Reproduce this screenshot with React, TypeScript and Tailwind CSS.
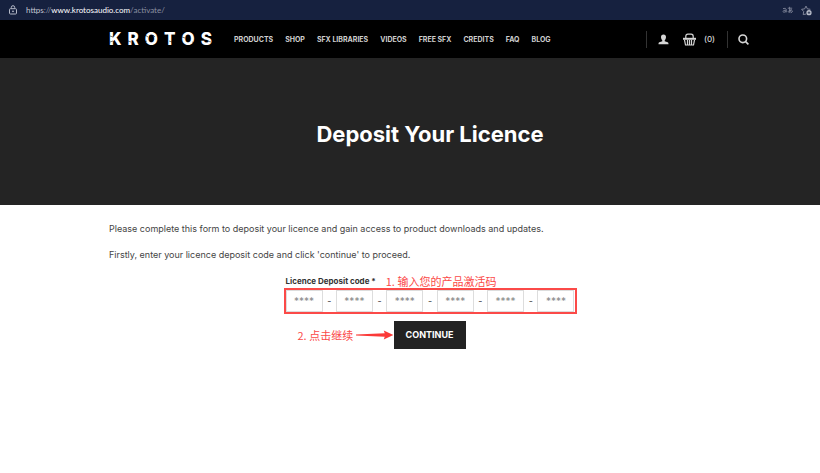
import { FormEvent, useState } from 'react'

const NAV_ITEMS = ['PRODUCTS', 'SHOP', 'SFX LIBRARIES', 'VIDEOS', 'FREE SFX', 'CREDITS', 'FAQ', 'BLOG']
const CODE_PARTS = 6

function AddressBar() {
  return (
    <div className="flex h-5 items-center bg-[#16213f] px-2 font-['Lato','Noto_Sans',sans-serif] text-[8px] text-[#8b90a0]">
      <svg viewBox="0 0 10 10" className="mr-2 size-[10px] shrink-0" fill="none" stroke="#b4b9c8" strokeWidth="1">
        <rect x="1.5" y="3.7" width="7" height="5.3" rx="0.9" />
        <path d="M3.3 3.5V2.4a1.7 1.7 0 0 1 3.4 0v1.1" />
        <circle cx="5" cy="6.3" r="0.5" fill="#b4b9c8" />
      </svg>
      <p className="grow leading-4">
        <span className="text-[#c3c7d2]">https</span>://<span className="text-white">www.krotosaudio.com</span>/activate/
      </p>
      <button aria-label="Translate" className="mr-2 flex">
        <svg viewBox="0 0 11 8" className="h-[8px] w-[11px]" fill="none" stroke="#7f8598" strokeWidth="0.9">
          <path d="M1 2.6q3-1 3.2.8v3M4.2 4.2Q1 4 .9 5.5q.3 1.6 3.3 0" />
          <path d="M5.8 2.2h4.4M7.6.8q-.3 3.4.4 5.8M9.3 3.2Q8.4 6.2 6.8 6.4q-1.5-.4.4-1.9 2.6-1.2 3.2.4.1 1.4-1.6 1.9" />
        </svg>
      </button>
      <button aria-label="Add to favourites" className="flex">
        <svg viewBox="0 0 11 11" className="size-[11px]" fill="none" stroke="#8b90a3" strokeWidth="0.9" strokeLinejoin="round">
          <path d="M5.2 9 2.2 9.6 2.7 6.5.6 4.3l3-.4L5 1.1l1.4 2.8 3 .4" />
          <circle cx="8" cy="7.7" r="2.6" fill="#b9bdca" stroke="none" />
          <path d="M8 6.4v2.6M6.7 7.7h2.6" stroke="#16213f" strokeWidth="0.7" />
        </svg>
      </button>
    </div>
  )
}

function Logo() {
  return (
    <a
      href="#"
      aria-label="KROTOS"
      className="relative flex w-[103px] justify-between text-[17px] leading-5 font-extrabold text-white"
    >
      {'KROTOS'.split('').map((letter, i) => (
        <span key={i}>{letter}</span>
      ))}
      {/* scratches across the letters */}
      <svg viewBox="0 0 103 20" className="absolute inset-0 h-5 w-full" fill="none" stroke="#000" strokeWidth="0.5">
        <path d="M1 7l3 1M1 13l3-1M19 12l3 1M36 6l3 2M44 6l2 2M35 13l3-1M56 7l3-1M60 12l3 1M73 8l3 1M83 13l3 1M92 9l3 1M99 12l3 1" />
      </svg>
    </a>
  )
}

function SiteHeader() {
  return (
    <header className="bg-black pl-10">
      <div className="mx-auto flex h-[38px] max-w-[642px] items-center pr-[2px]">
        <Logo />
        <nav className="ml-[22px] flex grow gap-3 pt-[2px] text-[7px] font-bold whitespace-nowrap text-[#cfcfcf]">
          {NAV_ITEMS.map((item) => (
            <a key={item} href="#">
              {item}
            </a>
          ))}
        </nav>
        <div className="flex items-center text-[#d6d6d6]">
          <span className="mr-[11px] h-[17px] w-px bg-[#333]" />
          <a href="#" aria-label="Account" className="mr-[14px]">
            <svg viewBox="0 0 11 11" className="size-[11px]" fill="currentColor">
              <path d="M5.5.5c1.7 0 2.5 1.1 2.5 2.6S7.3 5.9 6.7 6.5v.8l3 1c.6.3.8.8.8 1.9H.5c0-1.1.2-1.6.8-1.9l3-1v-.8C3.7 5.9 3 4.6 3 3.1S3.8.5 5.5.5z" />
            </svg>
          </a>
          <a href="#" aria-label="Basket" className="flex items-center text-[8px] leading-3">
            <svg viewBox="0 0 13 13" className="mr-2 size-[13px]" fill="none" stroke="currentColor">
              <path d="M2.8 5.5V3.4q0-2.2 2-2.2h3.4q2 0 2 2.2v2.1" strokeWidth="1.2" />
              <path d="M0 4.8h13v2H0z" fill="currentColor" stroke="none" />
              <path d="M1.5 6.8 2.5 12h8l1-5.2M4.5 7v5M6.500 7v5M8.500 7v5" strokeWidth="1.2" />
            </svg>
            <span className="font-medium">(0)</span>
          </a>
          <span className="mr-[10px] ml-3 h-[17px] w-px bg-[#333]" />
          <button aria-label="Search">
            <svg viewBox="0 0 11 11" className="block size-[11px]" fill="none" stroke="currentColor" strokeWidth="1.6">
              <circle cx="4.8" cy="4.8" r="3.8" />
              <path d="m7.6 7.6 2.8 2.8" />
            </svg>
          </button>
        </div>
      </div>
    </header>
  )
}

function DepositForm() {
  const [parts, setParts] = useState<string[]>(Array(CODE_PARTS).fill(''))

  function submit(e: FormEvent) {
    e.preventDefault()
  }

  return (
    <form onSubmit={submit} className="mx-auto mt-[11px] w-[293px]">
      <div className="flex h-[14px] items-center">
        <label htmlFor="code-0" className="ml-[2px] text-[8px] font-bold text-[#333]">
          Licence Deposit code *
        </label>
        <span className="ml-[10px] font-['Noto_Sans_CJK_SC',sans-serif] text-[11px] leading-4 text-[#fb4a48]">
          1. 输入您的产品激活码
        </span>
      </div>
      <div className="flex items-center justify-between border-2 border-[#fb4a48]">
        {parts.map((part, i) => (
          <div key={i} className="contents">
            {i > 0 && <span className="text-[9px] leading-4 text-[#444]">-</span>}
            <input
              id={`code-${i}`}
              aria-label={`Licence deposit code part ${i + 1}`}
              value={part}
              maxLength={4}
              placeholder="****"
              onChange={(e) => setParts(parts.map((p, j) => (j === i ? e.target.value : p)))}
              className="h-[22px] w-[37px] border border-[#ddd] text-center text-[10px] text-[#333] placeholder:text-[#888]"
            />
          </div>
        ))}
      </div>
      <div className="mt-[7px] flex items-center pl-[14px]">
        <span className="font-['Noto_Sans_CJK_SC',sans-serif] text-[11px] leading-4 whitespace-nowrap text-[#fb4a48]">
          2. 点击继续
        </span>
        <svg viewBox="0 0 39 10" className="ml-[3px] h-[10px] w-0 grow" preserveAspectRatio="none" fill="#fb3a38">
          <path d="M0 4.6 30 3.3 29 .5 39 5 29 9.5 30 6.7 0 5.4z" />
        </svg>
        <button className="mr-[111px] h-7 w-[72px] shrink-0 bg-[#222] text-[9px] font-bold text-white">CONTINUE</button>
      </div>
    </form>
  )
}

export default function App() {
  return (
    <div className="min-h-screen bg-white font-['Inter',sans-serif]">
      <AddressBar />
      <SiteHeader />
      <section className="flex h-[147px] items-center justify-center bg-[#242424] pt-1 pl-10">
        <h1 className="text-[22px] leading-7 font-bold text-white">Deposit Your Licence</h1>
      </section>
      <main className="pl-10">
        <div className="mx-auto max-w-[642px] pt-4">
          <p className="text-[9px] leading-4 text-[#444]">
            Please complete this form to deposit your licence and gain access to product downloads and updates.
          </p>
          <p className="mt-[10px] text-[9px] leading-4 text-[#444]">
            Firstly, enter your licence deposit code and click 'continue' to proceed.
          </p>
          <DepositForm />
        </div>
      </main>
    </div>
  )
}
